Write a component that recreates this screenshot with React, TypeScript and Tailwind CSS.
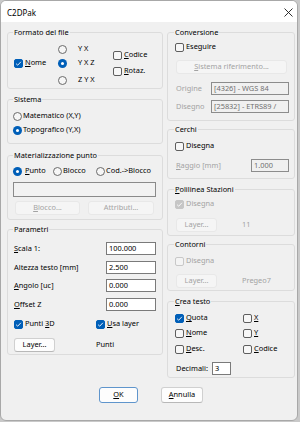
import React from "react";

const U = ({ children }: { children: React.ReactNode }) => <span className="underline underline-offset-[1px]">{children}</span>;

function Cb({ on = false, dis = false }: { on?: boolean; dis?: boolean }) {
  const cls = on
    ? dis
      ? "bg-[#c6c6c6] border-[#c6c6c6]"
      : "bg-[#005fb8] border-[#005fb8]"
    : dis
    ? "bg-[#f4f4f4] border-[#c8c8c8]"
    : "bg-[#f7f7f7] border-[#5e5e5e]";
  return (
    <span className={`inline-flex w-[9px] h-[9px] shrink-0 items-center justify-center rounded-[2px] border ${cls}`}>
      {on && (
        <svg width="7" height="7" viewBox="0 0 7 7">
          <path d="M1.1 3.7 L2.7 5.2 L5.9 1.8" stroke="white" strokeWidth="0.9" fill="none" />
        </svg>
      )}
    </span>
  );
}

function Rb({ on = false }: { on?: boolean }) {
  return (
    <span
      className={`inline-flex w-[9px] h-[9px] shrink-0 rounded-full items-center justify-center ${
        on ? "bg-[#005fb8]" : "border border-[#6a6a6a] bg-[#f6f6f6]"
      }`}
    >
      {on && <span className="w-[3px] h-[3px] rounded-full bg-white" />}
    </span>
  );
}

function Btn({ children, dis = false, className = "" }: { children: React.ReactNode; dis?: boolean; className?: string }) {
  return (
    <div
      className={`flex items-center justify-center rounded-[3px] border ${
        dis ? "bg-[#f5f5f5] border-[#e8e8e8] text-[#a3a3a3]" : "bg-[#fdfdfd] border-[#d0d0d0] border-b-[#b8b8b8] text-black"
      } ${className}`}
    >
      {children}
    </div>
  );
}

function Inp({ v, dis = false, className = "" }: { v: string; dis?: boolean; className?: string }) {
  return (
    <div
      className={`flex items-center pl-[2px] overflow-hidden whitespace-nowrap border ${
        dis ? "bg-[#f0f0f0] border-[#8c8c8c] text-[#707070]" : "bg-white border-[#7a7a7a] text-black"
      } ${className}`}
    >
      {v}
    </div>
  );
}

const FS = "m-0 min-w-0 p-0 border border-[#dcdcdc] rounded-[3px] w-full";
const LGL = "ml-[5px] px-[1px] h-[10px] leading-[10px]";
const LGR = "ml-[6px] px-[1px] h-[10px] leading-[10px]";
const ROW = "h-[12px] flex items-center";

export default function App() {
  return (
    <div className="w-[300px] h-[422px] bg-[#c9c9c9] font-['Noto_Sans',sans-serif] text-[7.4px] text-black leading-none">
      <div className="w-[298px] h-[421px] border border-[#a8a8a8] rounded-[6px] bg-[#f0f0f0] overflow-hidden flex flex-col">
        <div className="h-[21px] bg-white flex items-center justify-between pl-[6px] pr-[4px] shrink-0">
          <span className="text-[8px] mt-[2px]">C2DPak</span>
          <svg width="9" height="9" viewBox="0 0 9 9" className="mt-[1px]">
            <path d="M0.5 0.5 L8.5 8.5 M8.5 0.5 L0.5 8.5" stroke="#1a1a1a" strokeWidth="0.9" />
          </svg>
        </div>
        <div className="pt-[5px] pl-[6px] flex flex-col">
          <div className="flex items-start gap-[4px]">
            {/* Left column */}
            <div className="w-[156px] flex flex-col">
              <fieldset className={`${FS} h-[62px]`}>
                <legend className={LGL}>Formato del file</legend>
                <div className="flex">
                  <div className="w-[50px] pl-[6px] pt-[20px]">
                    <div className={ROW}>
                      <Cb on />
                      <span className="ml-[2px]">
                        <U>N</U>ome
                      </span>
                    </div>
                  </div>
                  <div className="w-[55px] flex flex-col">
                    <div className={`mt-[6px] ${ROW}`}>
                      <Rb />
                      <span className="ml-[11px]">Y X</span>
                    </div>
                    <div className={`mt-[2px] ${ROW}`}>
                      <Rb on />
                      <span className="ml-[11px]">Y X Z</span>
                    </div>
                    <div className={`mt-[5px] ${ROW}`}>
                      <Rb />
                      <span className="ml-[11px]">Z Y X</span>
                    </div>
                  </div>
                  <div className="flex flex-col">
                    <div className={`mt-[12px] ${ROW}`}>
                      <Cb />
                      <span className="ml-[2px]">
                        <U>C</U>odice
                      </span>
                    </div>
                    <div className={`mt-[4px] ${ROW}`}>
                      <Cb />
                      <span className="ml-[2px]">
                        <U>R</U>otaz.
                      </span>
                    </div>
                  </div>
                </div>
              </fieldset>

              <fieldset className={`${FS} h-[50px] mt-[5px]`}>
                <legend className={LGL}>Sistema</legend>
                <div className={`mt-[6px] ml-[5px] ${ROW}`}>
                  <Rb />
                  <span className="ml-[1px]">Matematico (X,Y)</span>
                </div>
                <div className={`mt-[2px] ml-[5px] ${ROW}`}>
                  <Rb on />
                  <span className="ml-[1px]">Topografico (Y,X)</span>
                </div>
              </fieldset>

              <fieldset className={`${FS} h-[70px] mt-[6px]`}>
                <legend className={LGL}>Materializzazione punto</legend>
                <div className={`mt-[5px] pl-[5px] ${ROW}`}>
                  <div className="w-[40px] flex items-center">
                    <Rb on />
                    <span className="ml-[3px]">
                      <U>P</U>unto
                    </span>
                  </div>
                  <div className="w-[43px] flex items-center">
                    <Rb />
                    <span className="ml-[1px]">Blocco</span>
                  </div>
                  <div className="flex items-center">
                    <Rb />
                    <span className="ml-[1px]">Cod.-&gt;Blocco</span>
                  </div>
                </div>
                <div className="mt-[5px] ml-[5px] w-[143px] h-[15px] border border-[#8a8a8a] bg-[#f2f2f2]" />
                <div className="mt-[4px] pl-[7px] flex">
                  <Btn dis className="w-[65px] h-[14px]">
                    <span>
                      <U>B</U>locco...
                    </span>
                  </Btn>
                  <Btn dis className="w-[66px] h-[14px] ml-[8px]">
                    Attributi...
                  </Btn>
                </div>
              </fieldset>

              <fieldset className={`${FS} h-[131px] mt-[4px]`}>
                <legend className={LGL}>Parametri</legend>
                <div className="mt-[8px] h-[13px] flex items-center pl-[6px] pr-[6px]">
                  <span>
                    <U>S</U>cala 1:
                  </span>
                  <Inp v="100.000" className="ml-auto w-[50px] h-[13px]" />
                </div>
                <div className="mt-[6px] h-[13px] flex items-center pl-[6px] pr-[6px]">
                  <span>Altezza testo [mm]</span>
                  <Inp v="2.500" className="ml-auto w-[50px] h-[13px]" />
                </div>
                <div className="mt-[5px] h-[13px] flex items-center pl-[6px] pr-[6px]">
                  <span>
                    <U>A</U>ngolo [uc]
                  </span>
                  <Inp v="0.000" className="ml-auto w-[50px] h-[13px]" />
                </div>
                <div className="mt-[6px] h-[13px] flex items-center pl-[6px] pr-[6px]">
                  <span>
                    <U>O</U>ffset Z
                  </span>
                  <Inp v="0.000" className="ml-auto w-[50px] h-[13px]" />
                </div>
                <div className={`mt-[7px] pl-[6px] ${ROW}`}>
                  <div className="w-[82px] flex items-center">
                    <Cb on />
                    <span className="ml-[2px]">
                      Punti <U>3</U>D
                    </span>
                  </div>
                  <div className="flex items-center">
                    <Cb on />
                    <span className="ml-[2px]">
                      <U>U</U>sa layer
                    </span>
                  </div>
                </div>
                <div className="mt-[8px] h-[14px] flex items-center pl-[6px]">
                  <Btn className="w-[41px] h-[14px]">Layer...</Btn>
                  <span className="ml-[41px]">Punti</span>
                </div>
              </fieldset>
            </div>

            {/* Right column */}
            <div className="w-[128px] flex flex-col">
              <fieldset className={`${FS} h-[94px]`}>
                <legend className={LGR}>Conversione</legend>
                <div className={`mt-[4px] pl-[7px] ${ROW}`}>
                  <Cb />
                  <span className="ml-[2px]">Eseguire</span>
                </div>
                <Btn dis className="mt-[7px] ml-[8px] w-[111px] h-[14px]">
                  <span>
                    <U>S</U>istema riferimento...
                  </span>
                </Btn>
                <div className="mt-[8px] h-[13px] pl-[8px] flex items-center">
                  <span className="w-[35px] text-[#a3a3a3]">Origine</span>
                  <Inp dis v="[4326] - WGS 84" className="w-[78px] h-[13px]" />
                </div>
                <div className="mt-[5px] h-[13px] pl-[8px] flex items-center">
                  <span className="w-[35px] text-[#a3a3a3]">Disegno</span>
                  <Inp dis v="[25832] - ETRS89 /" className="w-[78px] h-[13px]" />
                </div>
              </fieldset>

              <fieldset className={`${FS} h-[55px] mt-[3px]`}>
                <legend className={LGR}>Cerchi</legend>
                <div className={`mt-[6px] pl-[7px] ${ROW}`}>
                  <Cb />
                  <span className="ml-[2px]">Disegna</span>
                </div>
                <div className="mt-[7px] h-[13px] pl-[8px] flex items-center">
                  <span className="w-[75px] text-[#a3a3a3]">
                    <U>R</U>aggio [mm]
                  </span>
                  <Inp dis v="1.000" className="w-[38px] h-[13px]" />
                </div>
              </fieldset>

              <fieldset className={`${FS} h-[52px] mt-[5px]`}>
                <legend className={LGR}>
                  <U>P</U>olilinea Stazioni
                </legend>
                <div className={`mt-[4px] pl-[7px] ${ROW}`}>
                  <Cb on dis />
                  <span className="ml-[2px] text-[#a3a3a3]">Disegna</span>
                </div>
                <div className="mt-[8px] h-[14px] pl-[8px] flex items-center">
                  <Btn dis className="w-[41px] h-[14px]">
                    Layer...
                  </Btn>
                  <span className="ml-[25px] text-[#a3a3a3]">11</span>
                </div>
              </fieldset>

              <fieldset className={`${FS} h-[52px] mt-[3px]`}>
                <legend className={LGR}>Contorni</legend>
                <div className={`mt-[6px] pl-[7px] ${ROW}`}>
                  <Cb dis />
                  <span className="ml-[2px] text-[#a3a3a3]">Disegna</span>
                </div>
                <div className="mt-[7px] h-[14px] pl-[8px] flex items-center">
                  <Btn dis className="w-[41px] h-[14px]">
                    Layer...
                  </Btn>
                  <span className="ml-[25px] text-[#a3a3a3]">Pregeo7</span>
                </div>
              </fieldset>

              <fieldset className={`${FS} h-[82px] mt-[5px]`}>
                <legend className={LGR}>
                  <U>C</U>rea testo
                </legend>
                <div className={`mt-[6px] pl-[7px] ${ROW}`}>
                  <div className="w-[68px] flex items-center">
                    <Cb on />
                    <span className="ml-[2px]">
                      <U>Q</U>uota
                    </span>
                  </div>
                  <div className="flex items-center">
                    <Cb />
                    <span className="ml-[2px]">
                      <U>X</U>
                    </span>
                  </div>
                </div>
                <div className={`mt-[3px] pl-[7px] ${ROW}`}>
                  <div className="w-[68px] flex items-center">
                    <Cb />
                    <span className="ml-[2px]">
                      <U>N</U>ome
                    </span>
                  </div>
                  <div className="flex items-center">
                    <Cb />
                    <span className="ml-[2px]">
                      <U>Y</U>
                    </span>
                  </div>
                </div>
                <div className={`mt-[4px] pl-[7px] ${ROW}`}>
                  <div className="w-[68px] flex items-center">
                    <Cb />
                    <span className="ml-[2px]">
                      <U>D</U>esc.
                    </span>
                  </div>
                  <div className="flex items-center">
                    <Cb />
                    <span className="ml-[2px]">
                      <U>C</U>odice
                    </span>
                  </div>
                </div>
                <div className="mt-[7px] h-[13px] pl-[8px] flex items-center">
                  <span className="w-[36px]">Decimali:</span>
                  <Inp v="3" className="w-[19px] h-[13px]" />
                </div>
              </fieldset>
            </div>
          </div>

          <div className="mt-[9px] pl-[92px] flex">
            <Btn className="w-[39px] h-[16px] !border-[#5f95cc]">
              <span>
                <U>O</U>K
              </span>
            </Btn>
            <Btn className="w-[42px] h-[16px] ml-[23px]">
              <span>
                <U>A</U>nnulla
              </span>
            </Btn>
          </div>
        </div>
      </div>
    </div>
  );
}
